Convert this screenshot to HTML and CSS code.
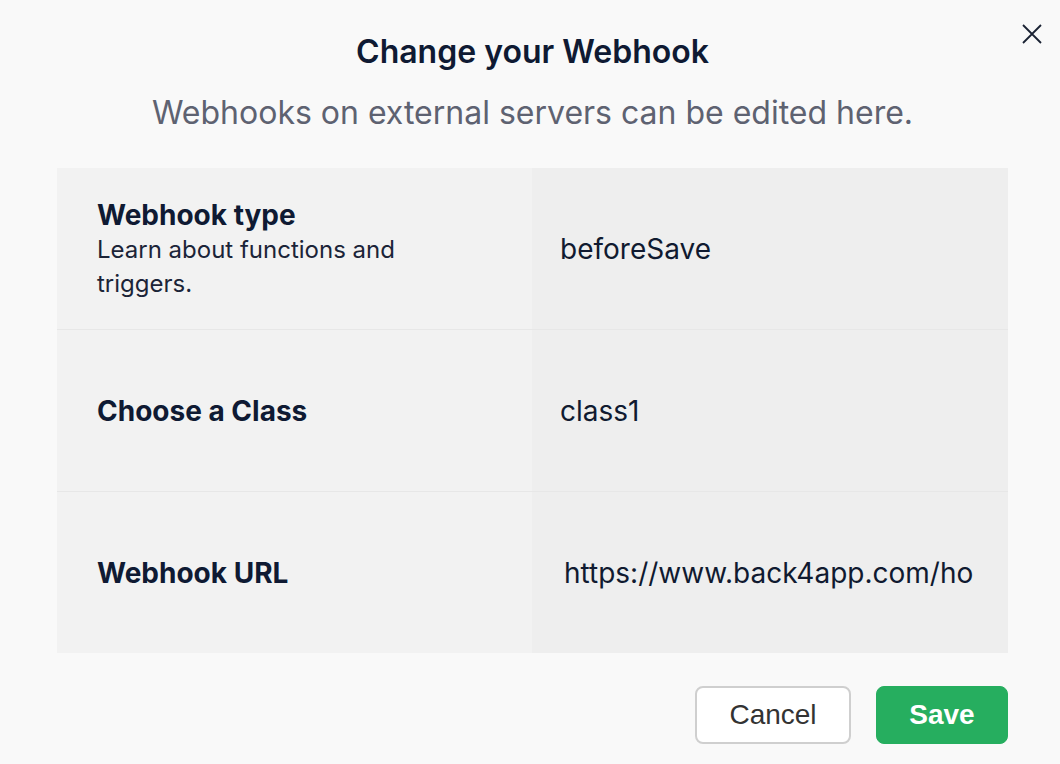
FILE: index.html
```html
<!DOCTYPE html>
<html lang="en">
<head>
<meta charset="utf-8">
<title>Change your Webhook</title>
<link rel="stylesheet" href="styles.css">
</head>
<body>
<div class="modal">
  <button class="close" aria-label="Close">
    <svg width="20" height="20" viewBox="0 0 20 20"><path d="M1 1 L19 19 M19 1 L1 19" stroke="#1a2233" stroke-width="1.8" fill="none"/></svg>
  </button>
  <h1 class="title">Change your Webhook</h1>
  <p class="subtitle">Webhooks on external servers can be edited here.</p>
  <div class="fields">
    <div class="row">
      <div class="label">
        <div class="label-title">Webhook type</div>
        <div class="label-desc">Learn about functions and triggers.</div>
      </div>
      <div class="value">beforeSave</div>
    </div>
    <div class="row">
      <div class="label">
        <div class="label-title">Choose a Class</div>
      </div>
      <div class="value">class1</div>
    </div>
    <div class="row">
      <div class="label">
        <div class="label-title">Webhook URL</div>
      </div>
      <div class="value">
        <input class="url" type="text" value="https://www.back4app.com/hook" readonly>
      </div>
    </div>
  </div>
  <div class="actions">
    <button class="btn btn-cancel">Cancel</button>
    <button class="btn btn-save">Save</button>
  </div>
</div>
</body>
</html>
```

FILE: styles.css
```css
html, body {
  margin: 0;
  padding: 0;
  background: #f9f9f9;
  font-family: Inter, "Noto Sans", sans-serif;
  color: #0f1a33;
}

.modal {
  width: 1060px;
  height: 764px;
  box-sizing: border-box;
  padding: 32px 52px 0 57px;
  position: relative;
}

.close {
  position: absolute;
  top: 24px;
  right: 18px;
  border: none;
  background: transparent;
  padding: 0;
  width: 20px;
  height: 20px;
  cursor: pointer;
}
.close svg { display: block; }

.title {
  margin: 0;
  text-align: center;
  font-size: 32px;
  font-weight: 600;
  line-height: 40px;
  color: #0f1a33;
}

.subtitle {
  margin: 18px 0 0;
  text-align: center;
  font-size: 32px;
  font-weight: 400;
  line-height: 46px;
  color: #5e6271;
}

.fields {
  margin-top: 32px;
  display: flex;
  flex-direction: column;
  gap: 1px;
  background: #e7e7e7;
}

.row {
  display: grid;
  grid-template-columns: 475px 1fr;
  height: 161px;
}

.label {
  background: #f2f2f2;
  padding: 0 40px;
  display: flex;
  flex-direction: column;
  justify-content: center;
}

.label-title {
  font-size: 28px;
  font-weight: 650;
  line-height: 36px;
  color: #0f1a33;
}

.label-desc {
  font-size: 24px;
  line-height: 34px;
  color: #1b2438;
  max-width: 340px;
}

.value {
  background: #eeeeee;
  padding: 0 28px;
  display: flex;
  align-items: center;
  font-size: 28px;
  color: #101a30;
}

.url {
  width: 410px;
  border: none;
  background: transparent;
  font-family: Inter, "Noto Sans", sans-serif;
  font-size: 28px;
  color: #101a30;
  padding: 0 0 0 4px;
  margin: 0;
  outline: none;
}

.actions {
  display: flex;
  justify-content: flex-end;
  gap: 25px;
  margin-top: 33px;
}

.btn {
  height: 58px;
  border-radius: 8px;
  font-family: "Liberation Sans", Arial, sans-serif;
  font-size: 28px;
  cursor: pointer;
}

.btn-cancel {
  width: 156px;
  background: #ffffff;
  border: 2px solid #cfcfcf;
  color: #333333;
}

.btn-save {
  width: 132px;
  background: #26ae5f;
  border: 1px solid #26ae5f;
  color: #ffffff;
  font-weight: 700;
}
```
